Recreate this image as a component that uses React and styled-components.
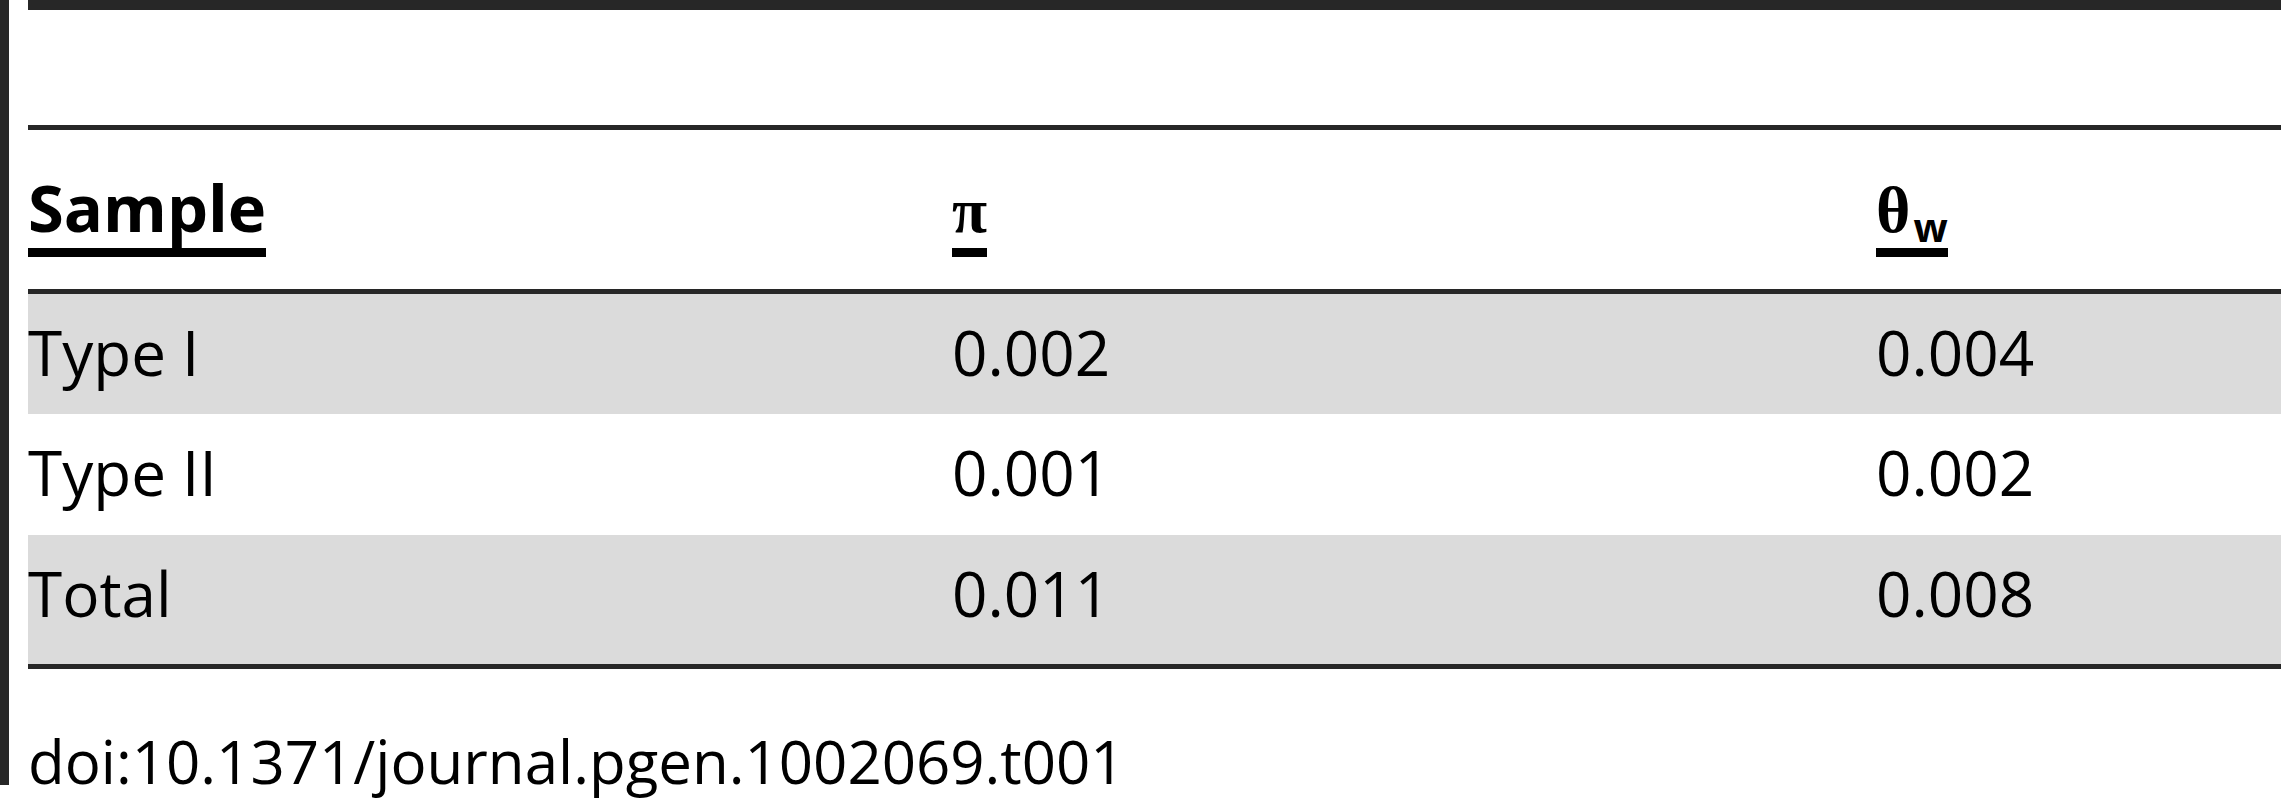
import React from "react";
import styled, { createGlobalStyle } from "styled-components";

const rows = [
  { sample: "Type I", pi: "0.002", theta: "0.004", shaded: true, height: 120 },
  { sample: "Type II", pi: "0.001", theta: "0.002", shaded: false, height: 121 },
  { sample: "Total", pi: "0.011", theta: "0.008", shaded: true, height: 129 },
];

const GlobalStyle = createGlobalStyle`
  html, body {
    margin: 0;
    padding: 0;
    background: #ffffff;
  }
  body {
    font-family: "Open Sans", "Noto Sans", sans-serif;
    color: #000000;
  }
`;

const Page = styled.div`
  position: relative;
  box-sizing: border-box;
  height: 800px;
  padding-left: 28px;
  display: flex;
  flex-direction: column;

  /* the rule on the left stops at the doi line, short of the page bottom */
  &::before {
    content: "";
    position: absolute;
    left: 0;
    top: 0;
    width: 9px;
    height: 785px;
    background: #272727;
  }
`;

const TableFrame = styled.div`
  border-top: 10px solid #272727;
`;

const TitleSpace = styled.div`
  height: 115px;
  border-bottom: 5px solid #272727;
`;

const Grid = styled.div`
  display: grid;
  grid-template-columns: 924px 924px 1fr;
`;

const HeaderRow = styled(Grid)`
  padding: 45px 0 32px;
  border-bottom: 5px solid #272727;
`;

const HeadCell = styled.div`
  display: flex;
  align-items: flex-start;
`;

const HeadLabel = styled.span`
  display: inline-block;
  font-family: "Open Sans", "Noto Sans", sans-serif;
  font-weight: 700;
  font-size: 65px;
  line-height: 64px;
  padding-bottom: 9px;
  border-bottom: 9px solid #000000;
  white-space: nowrap;
`;

const Greek = styled.span`
  font-family: "Liberation Serif", "DejaVu Serif", serif;
  font-weight: 700;
  font-size: ${(p) => p.$size}px;
  line-height: 0;
`;

const Sub = styled.span`
  font-family: "Open Sans", "Noto Sans", sans-serif;
  font-weight: 700;
  font-size: 40px;
  line-height: 0;
  vertical-align: -10px;
  margin-left: 3px;
`;

const Body = styled.div`
  border-bottom: 5px solid #272727;
`;

const BodyRow = styled(Grid)`
  box-sizing: border-box;
  height: ${(p) => p.$height}px;
  padding-top: 27px;
  background: ${(p) => (p.$shaded ? "#dbdbdb" : "#ffffff")};
`;

const Cell = styled.div`
  font-size: 62px;
  line-height: 62px;
  white-space: nowrap;
`;

const Doi = styled.div`
  margin-top: 62px;
  font-size: 60px;
  line-height: 60px;
  white-space: nowrap;
`;

const App = () => {
  return (
    <>
      <GlobalStyle />
      <Page>
        <TableFrame>
          <TitleSpace />
          <HeaderRow>
            <HeadCell>
              <HeadLabel>Sample</HeadLabel>
            </HeadCell>
            <HeadCell>
              <HeadLabel>
                <Greek $size={64}>π</Greek>
              </HeadLabel>
            </HeadCell>
            <HeadCell>
              <HeadLabel>
                <Greek $size={66}>θ</Greek>
                <Sub>w</Sub>
              </HeadLabel>
            </HeadCell>
          </HeaderRow>
          <Body>
            {rows.map((row) => (
              <BodyRow key={row.sample} $shaded={row.shaded} $height={row.height}>
                <Cell>{row.sample}</Cell>
                <Cell>{row.pi}</Cell>
                <Cell>{row.theta}</Cell>
              </BodyRow>
            ))}
          </Body>
        </TableFrame>
        <Doi>doi:10.1371/journal.pgen.1002069.t001</Doi>
      </Page>
    </>
  );
};

export default App;
